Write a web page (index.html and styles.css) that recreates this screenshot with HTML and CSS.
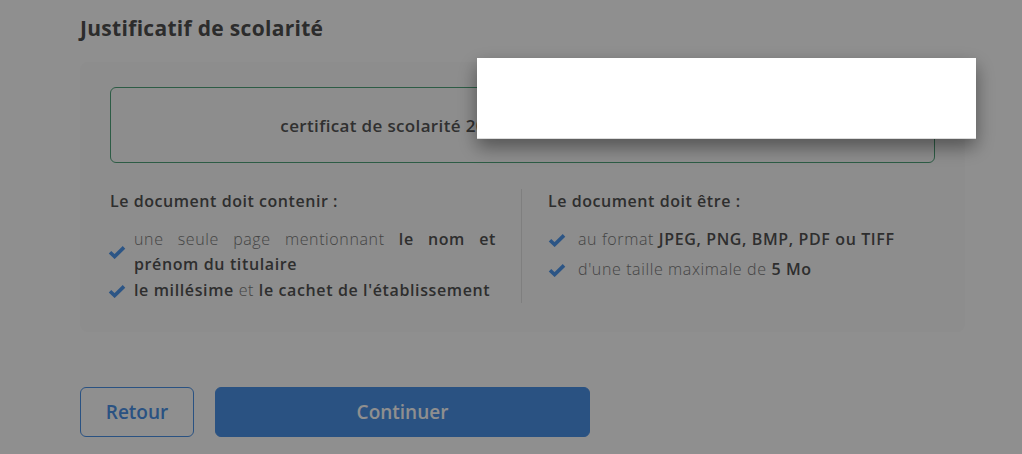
FILE: index.html
```html
<!DOCTYPE html>
<html lang="fr">
<head>
<meta charset="utf-8">
<title>Justificatif de scolarité</title>
<link rel="stylesheet" href="styles.css">
</head>
<body>
<main class="page">
  <h2 class="title">Justificatif de scolarité</h2>
  <section class="card">
    <div class="file">certificat de scolarité 2023-2024 - justificatif etudiant.pdf</div>
    <div class="reqs">
      <div class="col col-left">
        <h3 class="col-title">Le document doit contenir :</h3>
        <ul class="list list-left">
          <li class="item">
            <svg class="check" viewBox="0 0 18 14" aria-hidden="true"><path d="M2 7.2 L6.6 11.6 L16 2.4" /></svg>
            <span class="txt justify"><span class="light">une seule page mentionnant</span> <b>le nom et prénom du titulaire</b></span>
          </li>
          <li class="item">
            <svg class="check" viewBox="0 0 18 14" aria-hidden="true"><path d="M2 7.2 L6.6 11.6 L16 2.4" /></svg>
            <span class="txt"><b>le millésime</b> <span class="light">et</span> <b>le cachet de l'établissement</b></span>
          </li>
        </ul>
      </div>
      <div class="col col-right">
        <h3 class="col-title">Le document doit être :</h3>
        <ul class="list list-right">
          <li class="item">
            <svg class="check" viewBox="0 0 18 14" aria-hidden="true"><path d="M2 7.2 L6.6 11.6 L16 2.4" /></svg>
            <span class="txt"><span class="light">au format</span> <b>JPEG, PNG, BMP, PDF ou TIFF</b></span>
          </li>
          <li class="item">
            <svg class="check" viewBox="0 0 18 14" aria-hidden="true"><path d="M2 7.2 L6.6 11.6 L16 2.4" /></svg>
            <span class="txt"><span class="light">d'une taille maximale de</span> <b>5 Mo</b></span>
          </li>
        </ul>
      </div>
    </div>
  </section>
  <div class="actions">
    <button class="btn btn-back" type="button">Retour</button>
    <button class="btn btn-next" type="button">Continuer</button>
  </div>
</main>
<div class="overlay"></div>
<div class="popup" role="dialog"></div>
</body>
</html>
```
FILE: styles.css
```css
* { box-sizing: border-box; }
html, body { margin: 0; padding: 0; }
body {
  background: #ffffff;
  font-family: "Open Sans", Lato, "Liberation Sans", sans-serif;
  color: #5c5c5c;
  width: 1022px;
  height: 454px;
  overflow: hidden;
}
.page {
  padding: 16px 57px 0 80px;
}
.title {
  margin: 0;
  font-size: 21px;
  line-height: 24px;
  font-weight: 700;
  letter-spacing: 0.3px;
  color: #4f4f4f;
}
.card {
  margin-top: 22px;
  background: #fbfbfb;
  border-radius: 8px;
  padding: 25px 30px 29px 30px;
}
.file {
  height: 76px;
  border: 1px solid #50a57b;
  border-radius: 6px;
  display: flex;
  align-items: center;
  justify-content: center;
  font-size: 17px;
  font-weight: 600;
  letter-spacing: 0.35px;
  color: #575757;
  white-space: nowrap;
  overflow: hidden;
}
.reqs {
  margin-top: 26px;
  display: grid;
  grid-template-columns: 412px 1fr;
}
.col-left {
  padding-right: 25px;
  border-right: 1px solid #e2e2e2;
}
.col-right {
  padding-left: 26px;
}
.col-title {
  margin: 0;
  font-size: 16px;
  line-height: 24px;
  font-weight: 600;
  letter-spacing: 0.55px;
  color: #535353;
}
.list {
  list-style: none;
  margin: 14px 0 0 0;
  padding: 0;
}
.item {
  display: flex;
  align-items: center;
  font-size: 16px;
  line-height: 25px;
  letter-spacing: 0.62px;
}
.list-left .item + .item { margin-top: 1px; }
.list-right .item + .item { margin-top: 5px; }
.check {
  flex: none;
  width: 18px;
  height: 14px;
  fill: none;
  stroke: #4f98ee;
  stroke-width: 3.6;
  stroke-linecap: butt;
  stroke-linejoin: miter;
}
.list-left .check { margin-left: -2px; margin-right: 8px; }
.list-right .check { margin-right: 12px; }
.txt { flex: 1; }
.justify { text-align: justify; text-align-last: left; }
.light { font-weight: 300; color: #7a7a7a; }
.txt b { font-weight: 600; color: #535353; }
.actions {
  margin-top: 55px;
  display: flex;
  gap: 21px;
}
.btn {
  height: 50px;
  border-radius: 6px;
  font-family: inherit;
  font-size: 19px;
  font-weight: 600;
  cursor: pointer;
}
.btn-back {
  width: 114px;
  background: #ffffff;
  border: 1px solid #4b92e8;
  color: #4b92e8;
}
.btn-next {
  width: 375px;
  background: #4b92e8;
  border: 1px solid #4b92e8;
  color: #ffffff;
}
.overlay {
  position: fixed;
  inset: 0;
  background: rgba(0, 0, 0, 0.44);
}
.popup {
  position: fixed;
  left: 477px;
  top: 58px;
  width: 499px;
  height: 81px;
  background: #ffffff;
  border-bottom: 1px solid #dcdcdc;
  box-shadow: 0 8px 18px rgba(0, 0, 0, 0.42);
}
```
